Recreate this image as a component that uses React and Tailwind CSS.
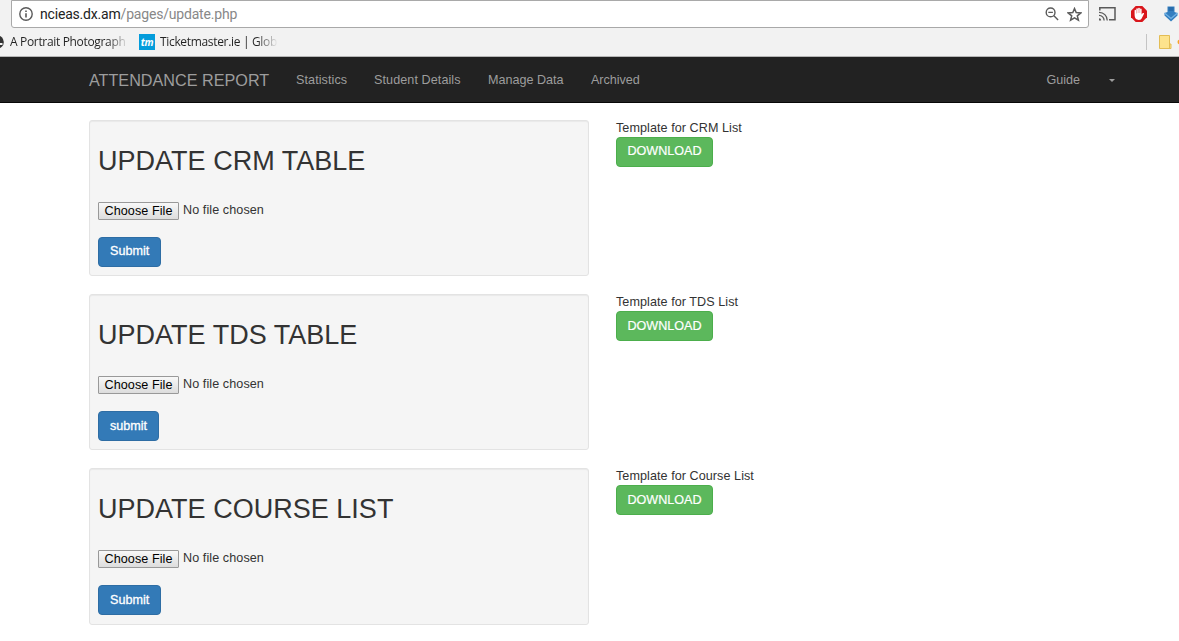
const sections = [
  { title: "UPDATE CRM TABLE", submit: "Submit", label: "Template for CRM List", panelClass: "h-[156px]", submitClass: "pb-[3px]", downloadClass: "pb-[3px]" },
  { title: "UPDATE TDS TABLE", submit: "submit", label: "Template for TDS List", panelClass: "h-[156px]", submitClass: "pb-px", downloadClass: "pb-px" },
  { title: "UPDATE COURSE LIST", submit: "Submit", label: "Template for Course List", panelClass: "h-[157px]", submitClass: "pb-px", downloadClass: "pb-px" },
];

function AddressBar() {
  return (
    <div className="flex h-[28px] items-start">
      <div className="ml-[11px] flex h-[28px] w-[1078px] items-center rounded-b-[3px] border border-[#a9a9a9] bg-white pl-[7px] pr-[6px]">
        <svg className="size-[14px] shrink-0" viewBox="0 0 14 14" fill="none" stroke="#5a5a5a" strokeWidth="1.4">
          <circle cx="7" cy="7" r="6.2" />
          <path d="M7 6.2v4.2M7 3.4v1.5" strokeWidth="1.6" />
        </svg>
        <span className="ml-[7px] font-['Roboto',sans-serif] text-[14px] leading-[26px] tracking-[-0.19px] whitespace-nowrap text-[#888]">
          <span className="text-[#222]">ncieas.dx.am</span>/pages/update.php
        </span>
        <svg className="ml-auto size-[14px]" viewBox="0 0 14 14" fill="none" stroke="#5a5a5a" strokeWidth="1.4">
          <circle cx="5.6" cy="5.4" r="4.4" />
          <path d="M3.3 5.4h4.6M8.9 8.7l4.2 4.2" />
        </svg>
        <svg className="ml-[8px] size-[15px]" viewBox="0 0 15 15" fill="none" stroke="#5a5a5a" strokeWidth="1.5">
          <path d="M7.5 1.6l1.700 4 4.600.3-3.500 2.900 1.100 4.400-3.900-2.400-3.900 2.400 1.100-4.400L1.200 5.900l4.600-.3z" />
        </svg>
      </div>
      <svg className="ml-[10px] mt-[7px] h-[14px] w-[17px]" viewBox="0 0 17 14" fill="none" stroke="#5a5a5a" strokeWidth="1.5">
        <path d="M.8 3.500V.8h15.200v12H10" />
        <path d="M0 5.300a8 8 0 0 1 8.200 8.200M0 8.400a5 5 0 0 1 5.100 5.100" strokeWidth="1.300" />
        <path d="M0 11.300a2.200 2.200 0 0 1 2.200 2.200H0z" fill="#5a5a5a" stroke="none" />
      </svg>
      <svg className="ml-[15px] mt-[6px] size-[16px]" viewBox="0 0 16 16">
        <path d="M4.700 0h6.600L16 4.700v6.600L11.300 16H4.700L0 11.300V4.700z" fill="#d9161b" />
        <path d="M3.600 8.600V4.400c0-.9 1.300-.9 1.400 0v3h.3V3c0-1 1.500-1 1.600 0v4h.3V2.300c.1-.9 1.500-.9 1.600 0V7h.3V3.200c.1-.9 1.500-.8 1.500.1v5.200l1-1.200c.6-.8 1.800-.3 1.300.6l-2 4.200c-.5 1.200-1.400 1.900-3 1.900-2.400 0-4.300-1.500-4.300-5.400z" fill="#fff" />
      </svg>
      <svg className="ml-[17px] mt-[6px] h-[16px] w-[14px] shrink-0" viewBox="0 0 14 16">
        <path d="M3.500.5h7V6l3 1v2.500L7 15.500.5 9.500V7l3-1z" fill="#347fc0" />
        <path d="M4.500 2h5M4.500 4h5" stroke="#1c5c98" strokeWidth="1" />
        <path d="M.5 7L7 12.500 13.500 7" fill="none" stroke="#75b5e6" strokeWidth="1.200" />
      </svg>
    </div>
  );
}

function Bookmarks() {
  return (
    <div className="flex h-[28px] items-center font-['Open_Sans','Noto_Sans',sans-serif] text-[12px] text-[#222]">
      <svg className="h-[14px] w-[4px] shrink-0" viewBox="0 0 4 14">
        <circle cx="-3" cy="7" r="6.800" fill="#333" />
        <path d="M0 4.500h2M0 8h2.500v2H0z" fill="#f2f2f2" />
      </svg>
      <span className="ml-[6px] w-[119px] shrink-0 bg-linear-to-r from-[#222] from-82% to-transparent bg-clip-text tracking-[-0.33px] whitespace-nowrap text-transparent">
        A Portrait Photograph
      </span>
      <span className="ml-[10px] flex size-[16px] shrink-0 items-center justify-center bg-[#049cdb] text-[10px] leading-none font-bold text-white italic">
        <span className="pb-px tracking-[-0.3px]">tm</span>
      </span>
      <span className="ml-[5px] w-[118px] shrink-0 bg-linear-to-r from-[#222] from-82% to-transparent bg-clip-text tracking-[-0.33px] whitespace-nowrap text-transparent">
        Ticketmaster.ie | Glob
      </span>
      <span className="ml-auto h-[16px] w-px bg-[#c4c4c4]" />
      <svg className="ml-[12px] h-[14px] w-[20px]" viewBox="0 0 20 14">
        <path d="M.5.500h10v8.500h1.500v4.500H.5z" fill="#fde38d" stroke="#e3bd55" />
        <path d="M10.500 9v4.500" stroke="#e3bd55" />
        <circle cx="21" cy="7" r="2.500" fill="#f5a623" />
      </svg>
    </div>
  );
}

function NavBar() {
  return (
    <nav className="flex h-[46px] items-center border-b border-[#080808] bg-[#222] pt-[2px] pl-[89px] text-[#9d9d9d]">
      <span className="w-[207px] text-[16.2px] whitespace-nowrap">ATTENDANCE REPORT</span>
      <span className="w-[78px] tracking-[0.08px] whitespace-nowrap">Statistics</span>
      <span className="w-[114px] tracking-[0.08px] whitespace-nowrap">Student Details</span>
      <span className="w-[103px] whitespace-nowrap">Manage Data</span>
      <span className="tracking-[-0.05px]">Archived</span>
      <span className="ml-auto">Guide</span>
      <svg className="mr-[64px] ml-[29px] h-[3px] w-[6px]" viewBox="0 0 6 3">
        <path d="M0 0h6L3 3z" fill="#9d9d9d" />
      </svg>
    </nav>
  );
}

function UploadRow({ title, submit, label, panelClass, submitClass, downloadClass }) {
  return (
    <section className="flex h-[174px] items-start">
      <div className={`flex w-[500px] flex-col items-start rounded-[3px] border border-[#e3e3e3] bg-[#f5f5f5] pl-[8px] shadow-[inset_0_1px_1px_rgba(0,0,0,0.05)] ${panelClass}`}>
        <h2 className="mt-[25px] text-[27px] leading-[30px] tracking-[0.02px] whitespace-nowrap">{title}</h2>
        <div className="mt-[26px] flex h-[18px] items-start">
          <button className="h-[18px] w-[81px] rounded-[1px] border border-[#999] bg-linear-to-b from-[#f8f8f8] to-[#dddddd] text-center leading-[16px] tracking-[0.08px] whitespace-nowrap text-black">
            Choose File
          </button>
          <span className="ml-[4px] leading-[16px] tracking-[0.08px]">No file chosen</span>
        </div>
        <button className={`mt-[17px] h-[30px] rounded-[4px] border border-[#2e6da4] bg-[#337ab7] px-[11px] leading-[18px] text-white [-webkit-text-stroke:0.3px_white] ${submitClass}`}>
          {submit}
        </button>
      </div>
      <div className="ml-[27px] flex flex-col items-start">
        <span className="h-[17px] leading-[17px] tracking-[0.06px]">{label}</span>
        <button className={`h-[30px] w-[97px] rounded-[4px] border border-[#4cae4c] bg-[#5cb85c] leading-[18px] text-white [-webkit-text-stroke:0.2px_white] ${downloadClass}`}>
          DOWNLOAD
        </button>
      </div>
    </section>
  );
}

export default function App() {
  return (
    <div className="h-[641px] w-[1179px] overflow-hidden bg-white font-['Liberation_Sans',Arial,sans-serif] text-[12.6px] text-[#333]">
      <header className="h-[57px] border-b border-[#b6b6b6] bg-[#f2f2f2]">
        <AddressBar />
        <Bookmarks />
      </header>
      <NavBar />
      <main className="pt-[17px] pl-[89px]">
        {sections.map((s) => (
          <UploadRow key={s.title} {...s} />
        ))}
      </main>
    </div>
  );
}
